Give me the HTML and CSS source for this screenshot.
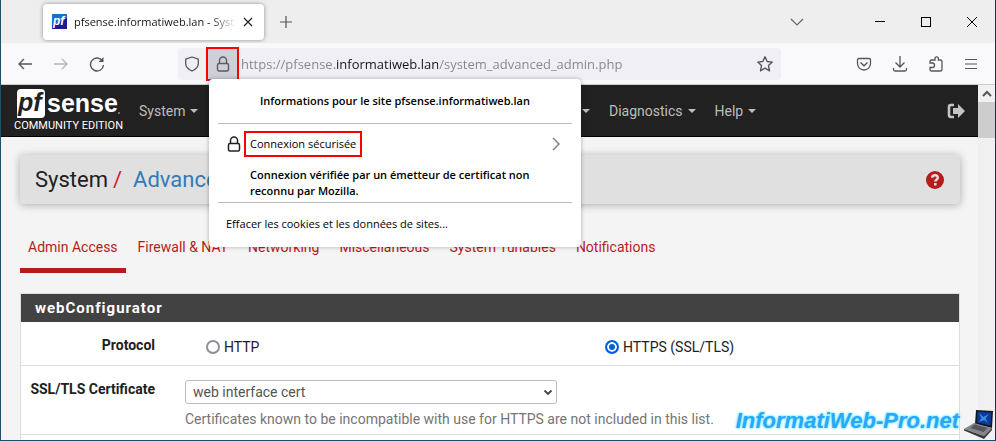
FILE: index.html
```html
<!DOCTYPE html>
<html lang="fr">
<head>
    <meta charset="UTF-8">
    <title>pfsense.informatiweb.lan - System: Advanced</title>
    <link rel="stylesheet" href="styles.css">
</head>
<body>
    <div class="window">
        <div class="tab-bar">
            <div class="browser-tab">
                <svg class="favicon" width="15" height="15" viewBox="0 0 15 15">
                    <rect width="15" height="15" fill="#1c1c8f"/>
                    <path d="M0 0h15v4L0 11z" fill="#1b6fc4"/>
                    <text x="1" y="11" class="favicon-text">pf</text>
                </svg>
                <span class="tab-title">pfsense.informatiweb.lan - System: Advanced</span>
                <button class="icon-button" aria-label="Fermer l'onglet">
                    <svg width="10" height="10" viewBox="0 0 10 10"><path d="M1 1l8 8M9 1l-8 8" stroke="#222" stroke-width="1.2"/></svg>
                </button>
            </div>
            <button class="icon-button new-tab" aria-label="Nouvel onglet">
                <svg width="12" height="12" viewBox="0 0 12 12"><path d="M6 0v12M0 6h12" stroke="#555" stroke-width="1.2"/></svg>
            </button>
            <div class="window-controls">
                <button class="icon-button list-tabs" aria-label="Lister les onglets">
                    <svg width="14" height="8" viewBox="0 0 14 8"><path d="M1 1l6 6 6-6" fill="none" stroke="#666" stroke-width="1.2"/></svg>
                </button>
                <button class="icon-button" aria-label="Réduire">
                    <svg width="12" height="12" viewBox="0 0 12 12"><path d="M1 5.5h10" stroke="#000"/></svg>
                </button>
                <button class="icon-button" aria-label="Agrandir">
                    <svg width="12" height="12" viewBox="0 0 12 12"><rect x="1.5" y="1.5" width="9" height="9" fill="none" stroke="#000"/></svg>
                </button>
                <button class="icon-button" aria-label="Fermer">
                    <svg width="12" height="12" viewBox="0 0 12 12"><path d="M1 1l10 10M11 1L1 11" stroke="#000"/></svg>
                </button>
            </div>
        </div>

        <div class="toolbar">
            <div class="nav-buttons">
                <button class="icon-button" aria-label="Précédent">
                    <svg width="16" height="16" viewBox="0 0 16 16" fill="none" stroke="#55555c" stroke-width="1.3"><path d="M15 8H2M7 3L2 8l5 5"/></svg>
                </button>
                <button class="icon-button" aria-label="Suivant" disabled>
                    <svg width="16" height="16" viewBox="0 0 16 16" fill="none" stroke="#b5b5ba" stroke-width="1.3"><path d="M1 8h13M9 3l5 5-5 5"/></svg>
                </button>
                <button class="icon-button" aria-label="Actualiser">
                    <svg width="16" height="16" viewBox="0 0 16 16" fill="none" stroke="#55555c" stroke-width="1.4"><path d="M13.5 5A6.5 6.5 0 1 0 14.5 9"/><path d="M14.5 1v5h-5z" fill="#55555c" stroke="none"/></svg>
                </button>
            </div>
            <div class="url-bar">
                <button class="icon-button shield" aria-label="Protection">
                    <svg width="16" height="16" viewBox="0 0 16 16" fill="none" stroke="#55555c" stroke-width="1.3"><path d="M8 1L14.3 3.2v4.3c0 3.4-2.8 5.900-6.300 7.500-3.500-1.600-6.300-4.100-6.300-7.500V3.200z" stroke-linejoin="round"/></svg>
                </button>
                <button class="icon-button site-info" aria-label="Informations sur le site">
                    <svg width="14" height="16" viewBox="0 0 14 16" fill="none" stroke="#5b5b66" stroke-width="1.4"><rect x="1.500" y="7.500" width="11" height="7.500" rx="1.500"/><path d="M3.500 7.500V4.500a3.500 3.500 0 0 1 7 0v3"/></svg>
                </button>
                <input class="url" type="text" aria-label="Adresse" value="https://pfsense.informatiweb.lan/system_advanced_admin.php">
                <button class="icon-button" aria-label="Marquer cette page">
                    <svg width="18" height="18" viewBox="0 0 18 18" fill="none" stroke="#55555c" stroke-width="1.4"><path d="M9 1.800l2.200 4.700 5.100.6-3.800 3.500 1 5.200L9 13.200l-4.500 2.600 1-5.200L1.700 7.100l5.100-.6z" stroke-linejoin="round"/></svg>
                </button>
            </div>
            <div class="tool-buttons">
                <button class="icon-button" aria-label="Pocket">
                    <svg width="16" height="16" viewBox="0 0 16 16" fill="none" stroke="#55555c" stroke-width="1.3"><path d="M3 2.500h10a1.500 1.500 0 0 1 1.500 1.500v3.500a6.500 6.500 0 0 1-13 0V4A1.500 1.500 0 0 1 3 2.500z"/><path d="M4.500 6.500L8 9.800l3.500-3.300"/></svg>
                </button>
                <button class="icon-button" aria-label="Téléchargements">
                    <svg width="16" height="16" viewBox="0 0 16 16" fill="none" stroke="#55555c" stroke-width="1.3"><path d="M8 0v11M3.500 6.500L8 11l4.500-4.500M1.500 12v1.500a1.500 1.500 0 0 0 1.500 1.500h10a1.500 1.500 0 0 0 1.500-1.500V12"/></svg>
                </button>
                <button class="icon-button" aria-label="Extensions">
                    <svg width="16" height="16" viewBox="0 0 16 16" fill="none" stroke="#55555c" stroke-width="1.3"><path d="M2 7V5.500A1.500 1.500 0 0 1 3.500 4H7V2.500a1.700 1.700 0 0 1 3.400 0V4h2.100A1.500 1.500 0 0 1 14 5.500v8a1.500 1.500 0 0 1-1.500 1.500h-9A1.500 1.500 0 0 1 2 13.500V11.500h2.300a2.200 2.200 0 0 0 0-4.500z"/></svg>
                </button>
                <button class="icon-button" aria-label="Menu">
                    <svg width="14" height="12" viewBox="0 0 14 12"><path d="M1 1.500h12M1 6h12M1 10.500h12" stroke="#55555c" stroke-width="1.200"/></svg>
                </button>
            </div>

            <div class="site-popup">
                <h2 class="popup-title">Informations pour le site pfsense.informatiweb.lan</h2>
                <div class="popup-section">
                    <button class="connection">
                        <svg width="14" height="16" viewBox="0 0 14 16" fill="none" stroke="#222" stroke-width="1.5"><rect x="1.500" y="7.500" width="11" height="7.500" rx="1.500"/><path d="M3.500 7.500V4.500a3.500 3.500 0 0 1 7 0v3"/></svg>
                        <span class="connection-name">Connexion sécurisée</span>
                        <svg class="chevron" width="8" height="14" viewBox="0 0 8 14"><path d="M1 1l6 6-6 6" fill="none" stroke="#777" stroke-width="1.400"/></svg>
                    </button>
                    <p class="popup-text">Connexion vérifiée par un émetteur de certificat non reconnu par Mozilla.</p>
                </div>
                <button class="clear-cookies">Effacer les cookies et les données de sites...</button>
            </div>
        </div>

        <div class="viewport">
            <div class="page">
                <nav class="navbar">
                    <a class="brand" href="#">
                        <svg width="108" height="30" viewBox="0 0 108 30">
                            <path d="M7 0h20a4 4 0 0 1 4 4v21a4 4 0 0 1-4 4H3V4a4 4 0 0 1 4-4z" fill="#fff"/>
                            <text x="4" y="22" class="logo-pf">pf</text>
                            <text x="33" y="23" class="logo-sense">sense</text>
                            <circle cx="105" cy="24" r="1" fill="#888"/>
                        </svg>
                        <span class="edition">COMMUNITY EDITION</span>
                    </a>
                    <div class="menu">
                        <a href="#">System</a>
                        <a href="#">Interfaces</a>
                        <a href="#">Firewall</a>
                        <a href="#">Services</a>
                        <a href="#">VPN</a>
                        <a href="#">Status</a>
                        <a href="#">Diagnostics</a>
                        <a href="#">Help</a>
                    </div>
                    <a class="logout" href="#" aria-label="Logout">
                        <svg width="18" height="16" viewBox="0 0 18 16"><path d="M7 2H4a2 2 0 0 0-2 2v8a2 2 0 0 0 2 2h3" fill="none" stroke="#c4c4c4" stroke-width="2.600"/><path d="M6 5h5V1l7 7-7 7v-4H6z" fill="#c4c4c4"/></svg>
                    </a>
                </nav>

                <main class="content">
                    <header class="breadcrumb">
                        <h1><span>System</span><span class="slash">/</span><a href="#">Advanced</a></h1>
                        <a class="help" href="#" aria-label="Help">
                            <svg width="18" height="18" viewBox="0 0 18 18"><circle cx="9" cy="9" r="9" fill="#b71c1c"/><path d="M6.200 6.800a2.800 2.500 0 0 1 5.600 0c0 1.900-2.500 1.900-2.500 3.800" fill="none" stroke="#e0e0e0" stroke-width="2.400"/><rect x="8" y="12" width="2.600" height="2.500" fill="#e0e0e0"/></svg>
                        </a>
                    </header>

                    <div class="tabs">
                        <a class="active" href="#">Admin Access</a>
                        <a href="#">Firewall &amp; NAT</a>
                        <a href="#">Networking</a>
                        <a href="#">Miscellaneous</a>
                        <a href="#">System Tunables</a>
                        <a href="#">Notifications</a>
                    </div>

                    <form class="panel">
                        <h2 class="panel-title">webConfigurator</h2>
                        <div class="form-row" role="radiogroup" aria-labelledby="protocol">
                            <span class="row-label" id="protocol">Protocol</span>
                            <div class="radios">
                                <label><input type="radio" name="protocol">HTTP</label>
                                <label><input type="radio" name="protocol" checked>HTTPS (SSL/TLS)</label>
                            </div>
                        </div>
                        <div class="form-row">
                            <label class="row-label" for="cert">SSL/TLS Certificate</label>
                            <div class="field">
                                <div class="select-box">
                                    <select id="cert">
                                        <option>web interface cert</option>
                                    </select>
                                    <svg width="10" height="7" viewBox="0 0 10 7"><path d="M1.500 1.500L5 5l3.500-3.500" fill="none" stroke="#444" stroke-width="1.800"/></svg>
                                </div>
                                <p class="hint">Certificates known to be incompatible with use for HTTPS are not included in this list.</p>
                            </div>
                        </div>
                    </form>
                </main>
            </div>

            <div class="scrollbar">
                <svg width="10" height="7" viewBox="0 0 10 7"><path d="M1 6l4-4 4 4" fill="none" stroke="#555" stroke-width="2"/></svg>
                <div class="thumb"></div>
            </div>
        </div>

        <div class="watermark">
            <span>InformatiWeb-Pro.net</span>
            <svg width="31" height="29" viewBox="0 0 31 29">
                <path d="M12 0l17 1-1 17-17-4z" fill="#15161c"/>
                <path d="M13.500 1.500l14 1-1 13-13.500-3z" fill="#0a3a9c"/>
                <path d="M15 3l4.500 4L25 4l-3.500 4.500L24 13l-4-3-5 2 2.500-4z" fill="#3d8fe0"/>
                <path d="M10 13l18 5-8 8L0 19z" fill="#85868a"/>
                <path d="M10.500 14.500l13 3.500-4 4-13-4z" fill="#54555a"/>
                <path d="M0 19l20 7 8-8v2l-8 9L0 20.500z" fill="#38393d"/>
            </svg>
        </div>
    </div>
</body>
</html>
```
FILE: styles.css
```css
* {
    box-sizing: border-box;
}

body {
    margin: 0;
    font-family: Roboto, sans-serif;
    font-size: 14px;
    color: #212121;
}

button,
input,
select {
    font: inherit;
}

a {
    text-decoration: none;
}

svg {
    display: block;
    flex: none;
}

/* browser window */
.window {
    position: relative;
    display: flex;
    flex-direction: column;
    height: 100vh;
    overflow: hidden;
    border: 1px solid #1f4e6b;
    border-top: none;
    border-right-color: #1b2f5a;
    background: #f4f4f4;
}

.icon-button {
    display: flex;
    align-items: center;
    justify-content: center;
    padding: 0;
    border: none;
    background: none;
}

.tab-bar {
    display: flex;
    align-items: center;
    height: 43px;
    padding-left: 42px;
    background: #eeeeee;
    font-family: "Open Sans", sans-serif;
    font-size: 11px;
}

.browser-tab {
    display: flex;
    align-items: center;
    gap: 7px;
    width: 221px;
    height: 36px;
    padding: 0 11px 0 9px;
    border-radius: 4px;
    background: #fff;
    box-shadow: 0 0 4px rgba(0, 0, 0, 0.4);
}

.favicon-text {
    font: italic bold 12px "Liberation Sans", sans-serif;
    fill: #fff;
}

.tab-title {
    flex: 1;
    overflow: hidden;
    white-space: nowrap;
    color: #15141a;
    -webkit-mask-image: linear-gradient(to left, transparent, #000 26px);
    mask-image: linear-gradient(to left, transparent, #000 26px);
}

.new-tab {
    margin-left: 16px;
}

.window-controls {
    display: flex;
    align-items: center;
    gap: 34px;
    margin-left: auto;
    padding-right: 17px;
}

.list-tabs {
    margin-right: 36px;
}

.toolbar {
    position: relative;
    display: flex;
    align-items: center;
    height: 42px;
    padding: 0 17px 0 16px;
    border-bottom: 1px solid #cccccc;
    background: #f9f9fb;
}

.nav-buttons {
    display: flex;
    gap: 20px;
    width: 161px;
}

.url-bar {
    display: flex;
    flex: 1;
    align-items: center;
    height: 32px;
    padding-right: 7px;
    border-radius: 4px;
    background: #f0f0f4;
}

.shield {
    width: 28px;
    height: 32px;
}

.site-info {
    width: 33px;
    height: 34px;
    border: 2px solid #f00;
    background: #cfcfd8;
}

/* the host name stands out from the rest of the address */
.url {
    flex: 1;
    min-width: 0;
    padding: 0 0 0 2px;
    border: none;
    outline: none;
    font-family: "Open Sans", sans-serif;
    font-size: 13px;
    color: transparent;
    background: linear-gradient(to right, #84848a 96px, #15141a 96px, #15141a 199px, #84848a 199px);
    -webkit-background-clip: text;
    background-clip: text;
}

.tool-buttons {
    display: flex;
    align-items: center;
    gap: 20px;
    padding-left: 75px;
}

/* site information popup */
.site-popup {
    position: absolute;
    z-index: 2;
    top: 36px;
    left: 208px;
    width: 372px;
    padding: 0 9px 10px;
    border-radius: 4px;
    background: #fff;
    box-shadow: 0 0 4px rgba(0, 0, 0, 0.3);
    font-family: "Open Sans", sans-serif;
    font-size: 11px;
    line-height: 16px;
    color: #000;
}

.popup-title {
    margin: 0;
    padding: 14px 0;
    border-bottom: 1px solid #bbb;
    font-size: 11px;
    font-weight: 600;
    text-align: center;
}

.popup-section {
    padding-bottom: 3px;
    border-bottom: 1px solid #bbb;
}

.connection {
    display: flex;
    align-items: center;
    width: 100%;
    padding: 7px 12px 7px 9px;
    border: none;
    background: none;
    color: #000;
}

.connection-name {
    margin-left: 3px;
    padding: 3px 4px;
    border: 2px solid #f00;
}

.chevron {
    margin-left: auto;
}

.popup-text {
    margin: 0;
    padding: 3px 32px 0;
    font-weight: 600;
}

.clear-cookies {
    display: block;
    width: 100%;
    padding: 13px 8px 5px;
    border: none;
    background: none;
    color: #000;
    text-align: left;
}

/* web page */
.viewport {
    display: flex;
    flex: 1;
    min-height: 0;
}

.page {
    flex: 1;
    min-width: 0;
    overflow: hidden;
}

.scrollbar {
    display: flex;
    flex-direction: column;
    align-items: center;
    gap: 5px;
    width: 17px;
    padding-top: 5px;
    background: #f0f0f0;
}

.thumb {
    width: 100%;
    height: 36px;
    background: #cdcdcd;
}

.navbar {
    display: flex;
    align-items: center;
    height: 52px;
    padding: 0 13px;
    border-bottom: 1px solid #000;
    background: #212121;
}

.brand {
    width: 125px;
    color: #fff;
}

.logo-pf {
    font: italic bold 25px "Liberation Sans", sans-serif;
    fill: #212121;
}

.logo-sense {
    font: bold 25px "Liberation Sans", sans-serif;
    fill: #fff;
}

.edition {
    display: block;
    font-size: 11px;
    font-weight: 400;
    line-height: 14px;
}

.menu {
    display: flex;
    flex: 1;
    gap: 19px;
}

.menu a {
    display: flex;
    align-items: center;
    gap: 5px;
    color: #bdbdbd;
}

.menu a::after {
    content: "";
    border: 4px solid transparent;
    border-top-color: #bdbdbd;
    border-bottom: none;
}

.content {
    padding: 18px 18px 0 19px;
}

.breadcrumb {
    display: flex;
    align-items: center;
    justify-content: space-between;
    height: 49px;
    padding: 0 16px 0 15px;
    border-radius: 4px;
    background: #e0e0e0;
    box-shadow: 0 1px 8px rgba(0, 0, 0, 0.3);
}

.breadcrumb h1 {
    display: flex;
    margin: 0;
    font-size: 22px;
    font-weight: 400;
}

.slash {
    margin: 0 11px 0 5px;
    color: #c9202a;
}

.breadcrumb h1 a {
    color: #337ab7;
}

.tabs {
    display: flex;
    gap: 4px;
    margin: 18px 0 20px;
}

.tabs a {
    padding: 17px 8px 13px;
    border-bottom: 5px solid transparent;
    line-height: 16px;
    color: #b71c1c;
}

.tabs .active {
    border-bottom-color: #b71c1c;
}

.panel {
    border: 1px solid #dddddd;
    background: #fff;
    padding-bottom: 20px;
}

.panel-title {
    margin: 0;
    padding: 0 14px;
    background: #424242;
    color: #fff;
    font-size: 15px;
    font-weight: 700;
    letter-spacing: 1px;
    line-height: 28px;
}

.form-row {
    display: flex;
    gap: 30px;
    padding: 14px 0 7px;
    border-bottom: 1px solid #dddddd;
}

.row-label {
    width: 134px;
    font-weight: 700;
    line-height: 18px;
    text-align: right;
}

.radios {
    display: flex;
    flex: 1;
    padding-left: 21px;
}

.radios label {
    display: flex;
    flex: 0 0 53%;
    align-items: center;
    gap: 4px;
    line-height: 22px;
}

.radios label:last-child {
    flex: 1;
}

.radios input {
    appearance: none;
    width: 14px;
    height: 14px;
    margin: 0;
    border: 2px solid #8f8f9d;
    border-radius: 50%;
    background: #fff;
}

.radios input:checked {
    border-color: #0060df;
    background: #0060df;
    box-shadow: inset 0 0 0 2px #fff;
}

.field {
    flex: 1;
}

.select-box {
    position: relative;
    width: 48%;
}

.select-box select {
    appearance: none;
    width: 100%;
    height: 24px;
    padding: 0 7px;
    border: 1px solid #bbb;
    border-radius: 3px;
    background: #fff;
    color: #555;
}

.select-box svg {
    position: absolute;
    top: 9px;
    right: 4px;
    pointer-events: none;
}

.hint {
    margin: 7px 0 0;
    color: #757575;
    line-height: 16px;
}

.watermark {
    position: absolute;
    right: 0;
    bottom: 0;
    display: flex;
    align-items: center;
    gap: 5px;
    color: #2aa8f8;
    font: italic bold 22px "Liberation Sans", sans-serif;
    text-shadow: 0 0 2px #6fe3ff, 0 0 3px #6fe3ff;
}

.watermark span {
    padding-bottom: 6px;
}
```
